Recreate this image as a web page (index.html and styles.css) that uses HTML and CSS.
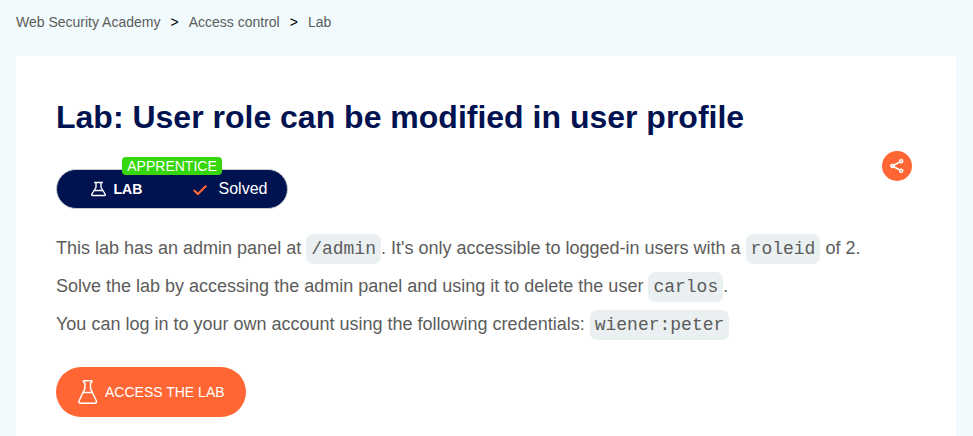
FILE: index.html
```html
<!DOCTYPE html>
<html lang="en">
<head>
<meta charset="utf-8">
<title>Lab: User role can be modified in user profile</title>
<link rel="stylesheet" href="styles.css">
</head>
<body>
<nav class="breadcrumbs">
  <a>Web Security Academy</a><span>&gt;</span><a>Access control</a><span>&gt;</span><a>Lab</a>
</nav>
<main class="card">
  <h1>Lab: User role can be modified in user profile</h1>
  <div class="status-row">
    <div class="status">
      <span class="level">APPRENTICE</span>
      <svg class="flask-small" viewBox="0 0 16 16" fill="none" stroke="#fff" stroke-width="1.4" stroke-linejoin="round"><path d="M3 1.500h9M5 1.500v5L.9 13q-.6 1.500.8 1.500h11.600q1.400 0 .8-1.500L10 6.500v-5M3.500 9.500h8"/></svg>
      <strong>LAB</strong>
      <svg class="check" viewBox="0 0 14 12" fill="none" stroke="#f63" stroke-width="2.200"><path d="M.8 6 4.900 10 13.200 1.800"/></svg>
      <span>Solved</span>
    </div>
    <button class="share" aria-label="Share">
      <svg viewBox="0 0 14 14" fill="none" stroke="#fff" stroke-width="1.600"><circle cx="2.300" cy="7" r="1.400"/><circle cx="11.200" cy="2.300" r="1.500"/><circle cx="11.200" cy="11.700" r="1.500"/><path d="m3.700 6.300 6.200-3.300M3.700 7.700l6.200 3.300"/></svg>
    </button>
  </div>
  <p>This lab has an admin panel at <code>/admin</code>. It's only accessible to logged-in users with a <code>roleid</code> of 2.</p>
  <p>Solve the lab by accessing the admin panel and using it to delete the user <code>carlos</code>.</p>
  <p>You can log in to your own account using the following credentials: <code>wiener:peter</code></p>
  <a class="access">
    <svg viewBox="0 0 20 26" fill="none" stroke="#fff" stroke-width="1.500" stroke-linejoin="round"><path d="M6 1.800h7.400q.6 0 .6.700t-.6 1l-.9.700v5.300l5.800 12.200q.8 2.600-1.600 2.600H2.700Q.3 24.300 1.100 21.700L6.900 9.500V4.200L6 3.500q-.6-.3-.6-1T6 1.800ZM4.800 13.500h9.800"/></svg>
    <span>ACCESS THE LAB</span>
  </a>
</main>
</body>
</html>
```
FILE: styles.css
```css
* { box-sizing: border-box; }
body {
  margin: 0;
  background: #f1fafc;
  color: #5c5c5b;
  font-family: "Liberation Sans", Arial, sans-serif;
}
.breadcrumbs {
  height: 56px;
  padding: 13px 16px;
  font-size: 14px;
  line-height: 18px;
}
.breadcrumbs span { margin: 0 10px; color: #000; }
.card {
  width: 940px;
  height: 380px;
  margin-left: 16px;
  padding: 41px 40px 0;
  background: #fff;
}
h1 {
  margin: 0;
  color: #00124f;
  font-size: 32px;
  line-height: 40px;
}
.status-row {
  display: flex;
  justify-content: space-between;
  align-items: flex-start;
  margin-top: 14px;
  padding-right: 4px;
}
.status {
  position: relative;
  display: flex;
  align-items: center;
  width: 232px;
  height: 40px;
  margin-top: 18px;
  padding-left: 34px;
  border: 1px solid #c5ccd3;
  border-radius: 20px;
  background: #00124f;
  color: #fff;
  font-size: 16px;
}
.status strong { width: 80px; margin-left: 6.5px; font-size: 14px; }
.level {
  position: absolute;
  top: -13px;
  left: 65px;
  width: 100px;
  height: 18px;
  border-radius: 4px;
  background: #36d60c;
  font-size: 14px;
  line-height: 19px;
  text-align: center;
}
.flask-small { width: 16px; height: 16px; margin-top: -1px; }
.check { width: 14px; height: 12px; margin: 1px 12px 0 -1px; }
.share {
  display: flex;
  align-items: center;
  justify-content: center;
  width: 30px;
  height: 30px;
  padding: 0;
  border: 0;
  border-radius: 50%;
  background: #f63;
}
.share svg { width: 14px; height: 14px; }
p { margin: 0; font-size: 18px; line-height: 38px; }
.status-row + p { margin-top: 20px; }
code {
  padding: 5px;
  border-radius: 7px;
  background: #eaf0f2;
  font: 18px "Liberation Mono", monospace;
}
.access {
  display: flex;
  align-items: center;
  width: 190px;
  height: 50px;
  margin-top: 24px;
  padding-left: 22px;
  border-radius: 25px;
  background: #f63;
  color: #fff;
  font-size: 14px;
}
.access svg { width: 20px; height: 26px; margin-right: 7px; }
```
